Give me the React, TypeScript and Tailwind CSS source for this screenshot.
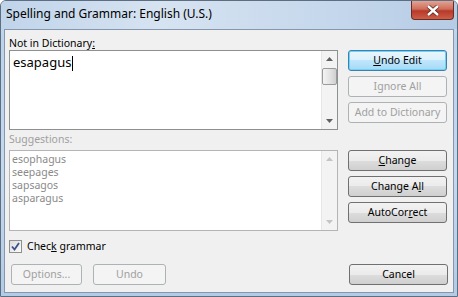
const ui = { fontFamily: '"Segoe UI", "Noto Sans", "Open Sans", sans-serif' };

const btnBase =
  "h-[21px] rounded-[3px] border text-[10.5px] flex items-center justify-center leading-none";
const btnNormal =
  btnBase +
  " border-[#707070] text-black bg-[linear-gradient(#f2f2f2,#ebebeb_50%,#dddddd_50%,#cfcfcf)]";
const btnDefault =
  btnBase +
  " border-[#3c7fb1] text-black shadow-[inset_0_0_0_1px_#6fd3f7] bg-[linear-gradient(#eaf6fd,#d9f0fc_50%,#bee6fd_50%,#a7d9f5)]";
const btnDisabled = btnBase + " border-[#adb2b5] text-[#a0a0a0] bg-[#f4f4f4]";

const ScrollBar = ({ disabled }: { disabled?: boolean }) => (
  <div className="w-[16px] h-full flex flex-col items-center bg-[#f3f3f3] border-l border-[#e6e6e6]">
    <div className="h-[16px] w-full flex items-center justify-center">
      <svg width="7" height="4" viewBox="0 0 7 4">
        <path d="M0 4 L3.5 0 L7 4 Z" fill={disabled ? "#c4c4c4" : "#606060"} />
      </svg>
    </div>
    {!disabled && (
      <div className="mt-[1px] w-[15px] h-[17px] rounded-[2px] border border-[#9a9a9a] bg-[linear-gradient(90deg,#f4f4f4,#e4e4e4_50%,#d0d0d0)]" />
    )}
    <div className="flex-1" />
    <div className="h-[16px] w-full flex items-center justify-center">
      <svg width="7" height="4" viewBox="0 0 7 4">
        <path d="M0 0 L3.5 4 L7 0 Z" fill={disabled ? "#c4c4c4" : "#606060"} />
      </svg>
    </div>
  </div>
);

export default function App() {
  return (
    <div
      className="w-[458px] h-[297px] flex flex-col rounded-t-[6px] border border-[#5d6d82] bg-[linear-gradient(180deg,#d3e3f3,#bcd3ea_12%,#c5d9ee_60%,#b3cbe4)] overflow-hidden"
      style={ui}
    >
      {/* title bar */}
      <div className="h-[28px] flex items-start justify-between bg-[linear-gradient(90deg,#c0d4ea,#d6e3f1_35%,#c6d8ec_70%,#b6cce5)]">
        <div className="pl-[5px] pt-[7px] text-[12px] text-black leading-none">
          Spelling and Grammar: English (U.S.)
        </div>
        <div className="mr-[3px] w-[43px] h-[19px] rounded-b-[4px] border border-t-0 border-[#6b2b20] bg-[linear-gradient(#e2a394,#cf6d5a_45%,#b8382a_55%,#cc5e48)] flex items-center justify-center">
          <svg width="14" height="11" viewBox="0 0 14 11">
            <path
              d="M2 1 L7 5.5 L12 1 M2 10 L7 5.5 L12 10"
              stroke="#5a2a22"
              strokeWidth="4"
              fill="none"
            />
            <path
              d="M2 1 L7 5.5 L12 1 M2 10 L7 5.5 L12 10"
              stroke="#ffffff"
              strokeWidth="2.4"
              fill="none"
            />
          </svg>
        </div>
      </div>

      {/* client area */}
      <div className="flex-1 mx-[3px] mb-[3px] border border-[#8596ad] bg-[#f0f0f0] flex flex-col">
        <div className="mt-[6px] h-[14px] pl-[4px] text-[10.5px] text-black leading-[14px]">
          Not in Dictionary<span className="underline">:</span>
        </div>

        <div className="flex pl-[4px] gap-[10px]">
          <div className="w-[329px] h-[80px] border border-[#8e8f8f] bg-white flex">
            <div className="flex-1 pl-[3px] pt-[3px] text-[13px] text-black leading-[16px]">
              esapagus<span className="inline-block w-[1px] h-[15px] bg-black align-middle ml-[1px]" />
            </div>
            <ScrollBar />
          </div>
          <div className="w-[99px] flex flex-col gap-[5px]">
            <div className={btnDefault}>
              <span>
                <span className="underline">U</span>ndo Edit
              </span>
            </div>
            <div className={btnDisabled}>Ignore All</div>
            <div className={btnDisabled}>Add to Dictionary</div>
          </div>
        </div>

        <div className="h-[20px] pl-[4px] flex items-center text-[10.5px] text-[#a0a0a0]">
          Suggestions:
        </div>

        <div className="flex pl-[4px] gap-[10px]">
          <div className="w-[329px] h-[81px] border border-[#b4b4b4] bg-white flex">
            <div className="flex-1 pl-[2px] pt-[2px] text-[10.5px] text-[#8a8a8a] leading-[13px]">
              <div>esophagus</div>
              <div>seepages</div>
              <div>sapsagos</div>
              <div>asparagus</div>
            </div>
            <ScrollBar disabled />
          </div>
          <div className="w-[99px] flex flex-col gap-[5px]">
            <div className={btnNormal}>
              <span>
                <span className="underline">C</span>hange
              </span>
            </div>
            <div className={btnNormal}>
              <span>
                Change A<span className="underline">l</span>l
              </span>
            </div>
            <div className={btnNormal}>
              <span>
                AutoCor<span className="underline">r</span>ect
              </span>
            </div>
          </div>
        </div>

        <div className="mt-[9px] h-[13px] pl-[4px] flex items-center gap-[5px]">
          <div className="w-[13px] h-[13px] border border-[#8e8f8f] bg-[linear-gradient(135deg,#dcdcdc,#fbfbfb)] flex items-center justify-center">
            <svg width="9" height="9" viewBox="0 0 9 9">
              <path d="M1 4.5 L3.5 7.5 L8 1" stroke="#3d4f8d" strokeWidth="1.8" fill="none" />
            </svg>
          </div>
          <span className="text-[10.5px] text-black leading-none">
            Chec<span className="underline">k</span> grammar
          </span>
        </div>

        <div className="mt-[11px] flex pl-[6px]">
          <div className={btnDisabled + " w-[71px]"}>Options...</div>
          <div className={btnDisabled + " w-[73px] ml-[11px]"}>Undo</div>
          <div className="flex-1" />
          <div className={btnNormal + " w-[99px] mr-[5px]"}>Cancel</div>
        </div>
      </div>
    </div>
  );
}
